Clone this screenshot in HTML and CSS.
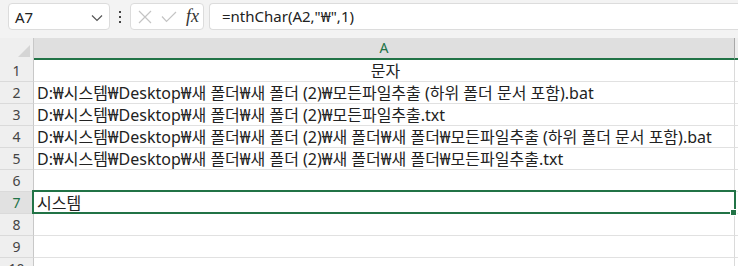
FILE: index.html
```html
<!DOCTYPE html>
<html lang="ko">
<head>
<meta charset="utf-8">
<title>Sheet</title>
<link rel="stylesheet" href="styles.css">
</head>
<body>
<div class="toolbar">
  <div class="namebox">
    <span class="cellref">A7</span>
    <svg class="chev" width="12" height="8" viewBox="0 0 12 8"><path d="M1 1.5 L6 6.5 L11 1.5" fill="none" stroke="#555" stroke-width="1.2"/></svg>
  </div>
  <div class="grip">
    <svg width="4" height="14" viewBox="0 0 4 14"><rect x="1" y="1" width="2" height="2" fill="#444"/><rect x="1" y="6" width="2" height="2" fill="#444"/><rect x="1" y="11" width="2" height="2" fill="#444"/></svg>
  </div>
  <div class="fxbox">
    <svg width="14" height="14" viewBox="0 0 14 14"><path d="M1 1 L13 13 M13 1 L1 13" stroke="#c4c4c4" stroke-width="1.2" fill="none"/></svg>
    <svg width="16" height="12" viewBox="0 0 16 12"><path d="M1 5.5 L5.5 10.5 L15 1" stroke="#c4c4c4" stroke-width="1.2" fill="none"/></svg>
    <span class="fx">fx</span>
  </div>
  <div class="formula">=nthChar(A2,"₩",1)</div>
</div>
<div class="sheet">
  <div class="corner"></div>
  <div class="colhead">A</div>
  <div class="colrest"></div>

  <div class="rowhead">1</div><div class="cell center">문자</div><div class="rest"></div>
  <div class="rowhead">2</div><div class="cell">D:₩시스템₩Desktop₩새 폴더₩새 폴더 (2)₩모든파일추출 (하위 폴더 문서 포함).bat</div><div class="rest"></div>
  <div class="rowhead">3</div><div class="cell">D:₩시스템₩Desktop₩새 폴더₩새 폴더 (2)₩모든파일추출.txt</div><div class="rest"></div>
  <div class="rowhead">4</div><div class="cell">D:₩시스템₩Desktop₩새 폴더₩새 폴더 (2)₩새 폴더₩새 폴더₩모든파일추출 (하위 폴더 문서 포함).bat</div><div class="rest"></div>
  <div class="rowhead">5</div><div class="cell">D:₩시스템₩Desktop₩새 폴더₩새 폴더 (2)₩새 폴더₩새 폴더₩모든파일추출.txt</div><div class="rest"></div>
  <div class="rowhead">6</div><div class="cell"></div><div class="rest"></div>
  <div class="rowhead active">7</div><div class="cell selected">시스템<span class="handle"></span></div><div class="rest"></div>
  <div class="rowhead">8</div><div class="cell"></div><div class="rest"></div>
  <div class="rowhead">9</div><div class="cell"></div><div class="rest"></div>
  <div class="rowhead">10</div><div class="cell"></div><div class="rest"></div>
</div>
</body>
</html>
```

FILE: styles.css
```css
html, body {
	margin: 0;
	padding: 0;
	background: #ffffff;
	overflow: hidden;
	font-family: "Noto Sans", "Noto Sans CJK KR", sans-serif;
	color: #222;
}
.toolbar {
	display: flex;
	align-items: flex-start;
	height: 38px;
	padding: 3px 0 0 8px;
	box-sizing: border-box;
	background: #f3f3f3;
}
.namebox {
	display: flex;
	align-items: center;
	justify-content: space-between;
	width: 102px;
	height: 27px;
	box-sizing: border-box;
	padding: 0 6px 0 6px;
	background: #fff;
	border: 1px solid #dcdcdc;
	border-radius: 4px;
}
.cellref {
	font-size: 15px;
}
.chev {
	margin-top: 2px;
}
.grip {
	width: 20px;
	height: 27px;
	display: flex;
	align-items: center;
	justify-content: center;
}
.fxbox {
	display: flex;
	align-items: center;
	gap: 9px;
	width: 74px;
	height: 27px;
	box-sizing: border-box;
	padding: 0 4px 0 7px;
	background: #fff;
	border: 1px solid #dcdcdc;
	border-radius: 4px;
}
.fx {
	font-family: "Liberation Serif", "DejaVu Serif", serif;
	font-style: italic;
	font-size: 18px;
	color: #333;
	line-height: 1;
	margin-top: -2px;
}
.formula {
	flex: 1;
	height: 27px;
	margin-left: 5px;
	box-sizing: border-box;
	padding: 0 0 0 12px;
	background: #fff;
	border: 1px solid #dcdcdc;
	border-right: 0;
	border-radius: 4px 0 0 4px;
	font-size: 15px;
	line-height: 25px;
}
.sheet {
	display: grid;
	grid-template-columns: 34px 701px 1fr;
	grid-auto-rows: 22px;
	font-size: 16px;
}
.corner {
	background: #efefef;
	border-right: 1px solid #c8c8c8;
	position: relative;
}
.corner::after {
	content: "";
	position: absolute;
	right: 3px;
	bottom: 3px;
	border-style: solid;
	border-width: 0 0 12px 12px;
	border-color: transparent transparent #d5d5d5 transparent;
}
.colhead {
	background: #dfdfdf;
	border-right: 1px solid #a8a8a8;
	border-bottom: 2px solid #217346;
	color: #217346;
	font-size: 14px;
	text-align: center;
	line-height: 20px;
}
.colrest {
	background: #eeeeee;
	border-bottom: 2px solid #217346;
}
.rowhead {
	background: #efefef;
	border-right: 1px solid #c8c8c8;
	border-bottom: 1px solid #dadada;
	text-align: center;
	font-size: 14px;
	line-height: 22px;
	color: #444;
}
.rowhead.active {
	background: #e1e1e1;
	color: #217346;
}
.cell {
	border-right: 1px solid #dadada;
	border-bottom: 1px solid #e1e1e1;
	padding-left: 3px;
	white-space: nowrap;
	overflow: visible;
	line-height: 22px;
}
.center {
	text-align: center;
}
.rest {
	border-bottom: 1px solid #e1e1e1;
}
.selected {
	position: relative;
}
.selected::after {
	content: "";
	position: absolute;
	left: -2px;
	top: -2px;
	right: -2px;
	bottom: -1px;
	border: 2px solid #217346;
}
.handle {
	position: absolute;
	right: -3px;
	bottom: -3px;
	width: 5px;
	height: 5px;
	background: #217346;
	border: 1px solid #fff;
	z-index: 2;
}
```
